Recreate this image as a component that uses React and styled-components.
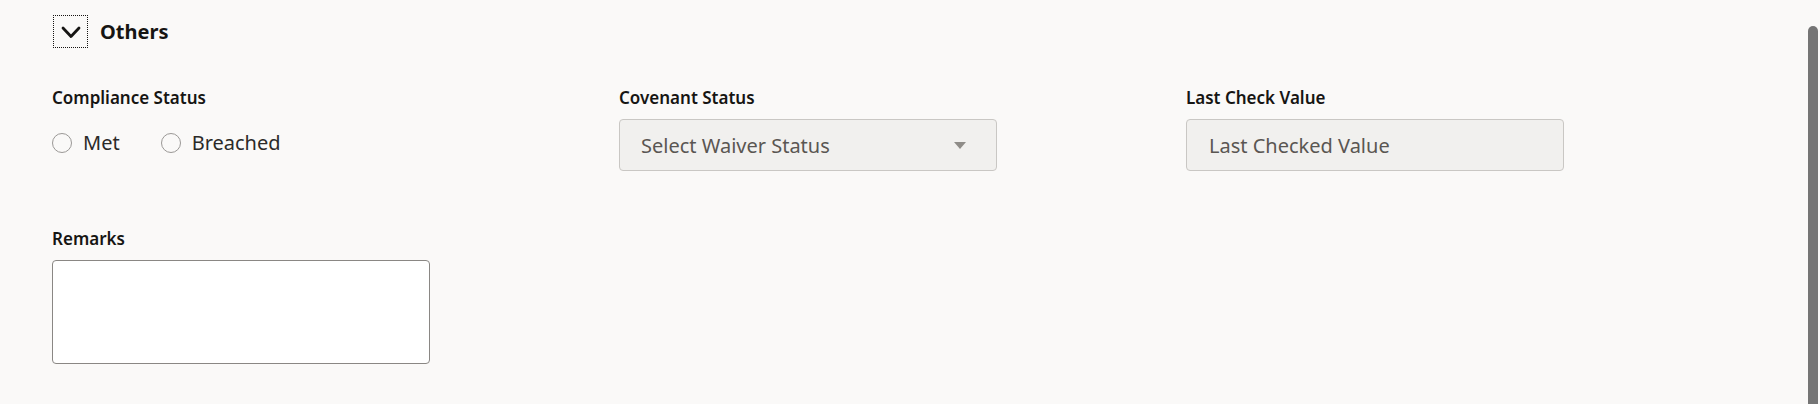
import React from "react";
import styled, { createGlobalStyle } from "styled-components";

const GlobalStyle = createGlobalStyle`
  html, body {
    margin: 0;
    padding: 0;
    background: #faf9f8;
    font-family: "Noto Sans", "Open Sans", sans-serif;
    color: #161513;
  }
`;

const Page = styled.div`
  display: flex;
  width: 1820px;
  height: 404px;
  overflow: hidden;
`;

const Content = styled.div`
  flex: 1;
  padding: 15px 0 0 52px;
`;

const Header = styled.div`
  display: flex;
  align-items: center;
  gap: 12px;
  margin-left: 1px;
`;

const Toggle = styled.button`
  width: 35px;
  height: 33px;
  padding: 0;
  display: flex;
  align-items: center;
  justify-content: center;
  background: transparent;
  border: 1px dotted #161513;
  color: #161513;
  cursor: pointer;
`;

const Title = styled.h2`
  margin: 0;
  font-size: 20px;
  font-weight: 700;
  line-height: 24px;
`;

const Grid = styled.div`
  display: grid;
  grid-template-columns: 567px 567px 567px;
  row-gap: 58px;
  margin-top: 40px;
`;

const Field = styled.div`
  display: flex;
  flex-direction: column;
  gap: 11px;
`;

const Label = styled.label`
  font-size: 17px;
  font-weight: 600;
  line-height: 20px;
  color: #161513;
`;

const RadioGroup = styled.div`
  display: flex;
  gap: 41px;
  margin-top: 12px;
`;

const RadioOption = styled.label`
  display: flex;
  align-items: center;
  gap: 11px;
  font-size: 20px;
  line-height: 24px;
  color: #2b2a28;
`;

const RadioCircle = styled.span`
  width: 20px;
  height: 20px;
  box-sizing: border-box;
  border: 1.5px solid #9a9896;
  border-radius: 50%;
  background: transparent;
`;

const Box = styled.div`
  box-sizing: border-box;
  width: 378px;
  height: 52px;
  display: flex;
  align-items: center;
  justify-content: space-between;
  padding: 0 30px 0 ${(p) => p.pad || 21}px;
  background: #f1f0ee;
  border: 1px solid #c9c7c4;
  border-radius: 4px;
  font-size: 20px;
  color: #5a5652;
`;

const Caret = styled.span`
  width: 0;
  height: 0;
  border-left: 6px solid transparent;
  border-right: 6px solid transparent;
  border-top: 7px solid #8f8c88;
`;

const TextArea = styled.div`
  box-sizing: border-box;
  width: 378px;
  height: 104px;
  background: #fff;
  border: 1px solid #8a8784;
  border-radius: 4px;
`;

const ScrollTrack = styled.div`
  width: 10px;
  padding-top: 26px;
  margin-right: 2px;
  display: flex;
`;

const ScrollThumb = styled.div`
  flex: 1;
  background: #757575;
  border-radius: 5px 5px 0 0;
`;

function Chevron() {
  return (
    <svg width="22" height="22" viewBox="0 0 22 22" fill="none">
      <path
        d="M3 7l8 8.5 8-8.5"
        stroke="currentColor"
        strokeWidth="2.8"
        strokeLinecap="round"
        strokeLinejoin="round"
      />
    </svg>
  );
}

export default function App() {
  return (
    <>
      <GlobalStyle />
      <Page>
        <Content>
          <Header>
            <Toggle aria-label="Collapse">
              <Chevron />
            </Toggle>
            <Title>Others</Title>
          </Header>

          <Grid>
            <Field>
              <Label>Compliance Status</Label>
              <RadioGroup>
                <RadioOption>
                  <RadioCircle />
                  Met
                </RadioOption>
                <RadioOption>
                  <RadioCircle />
                  Breached
                </RadioOption>
              </RadioGroup>
            </Field>

            <Field>
              <Label>Covenant Status</Label>
              <Box>
                Select Waiver Status
                <Caret />
              </Box>
            </Field>

            <Field>
              <Label>Last Check Value</Label>
              <Box pad={22}>Last Checked Value</Box>
            </Field>

            <Field>
              <Label>Remarks</Label>
              <TextArea />
            </Field>
          </Grid>
        </Content>
        <ScrollTrack>
          <ScrollThumb />
        </ScrollTrack>
      </Page>
    </>
  );
}
